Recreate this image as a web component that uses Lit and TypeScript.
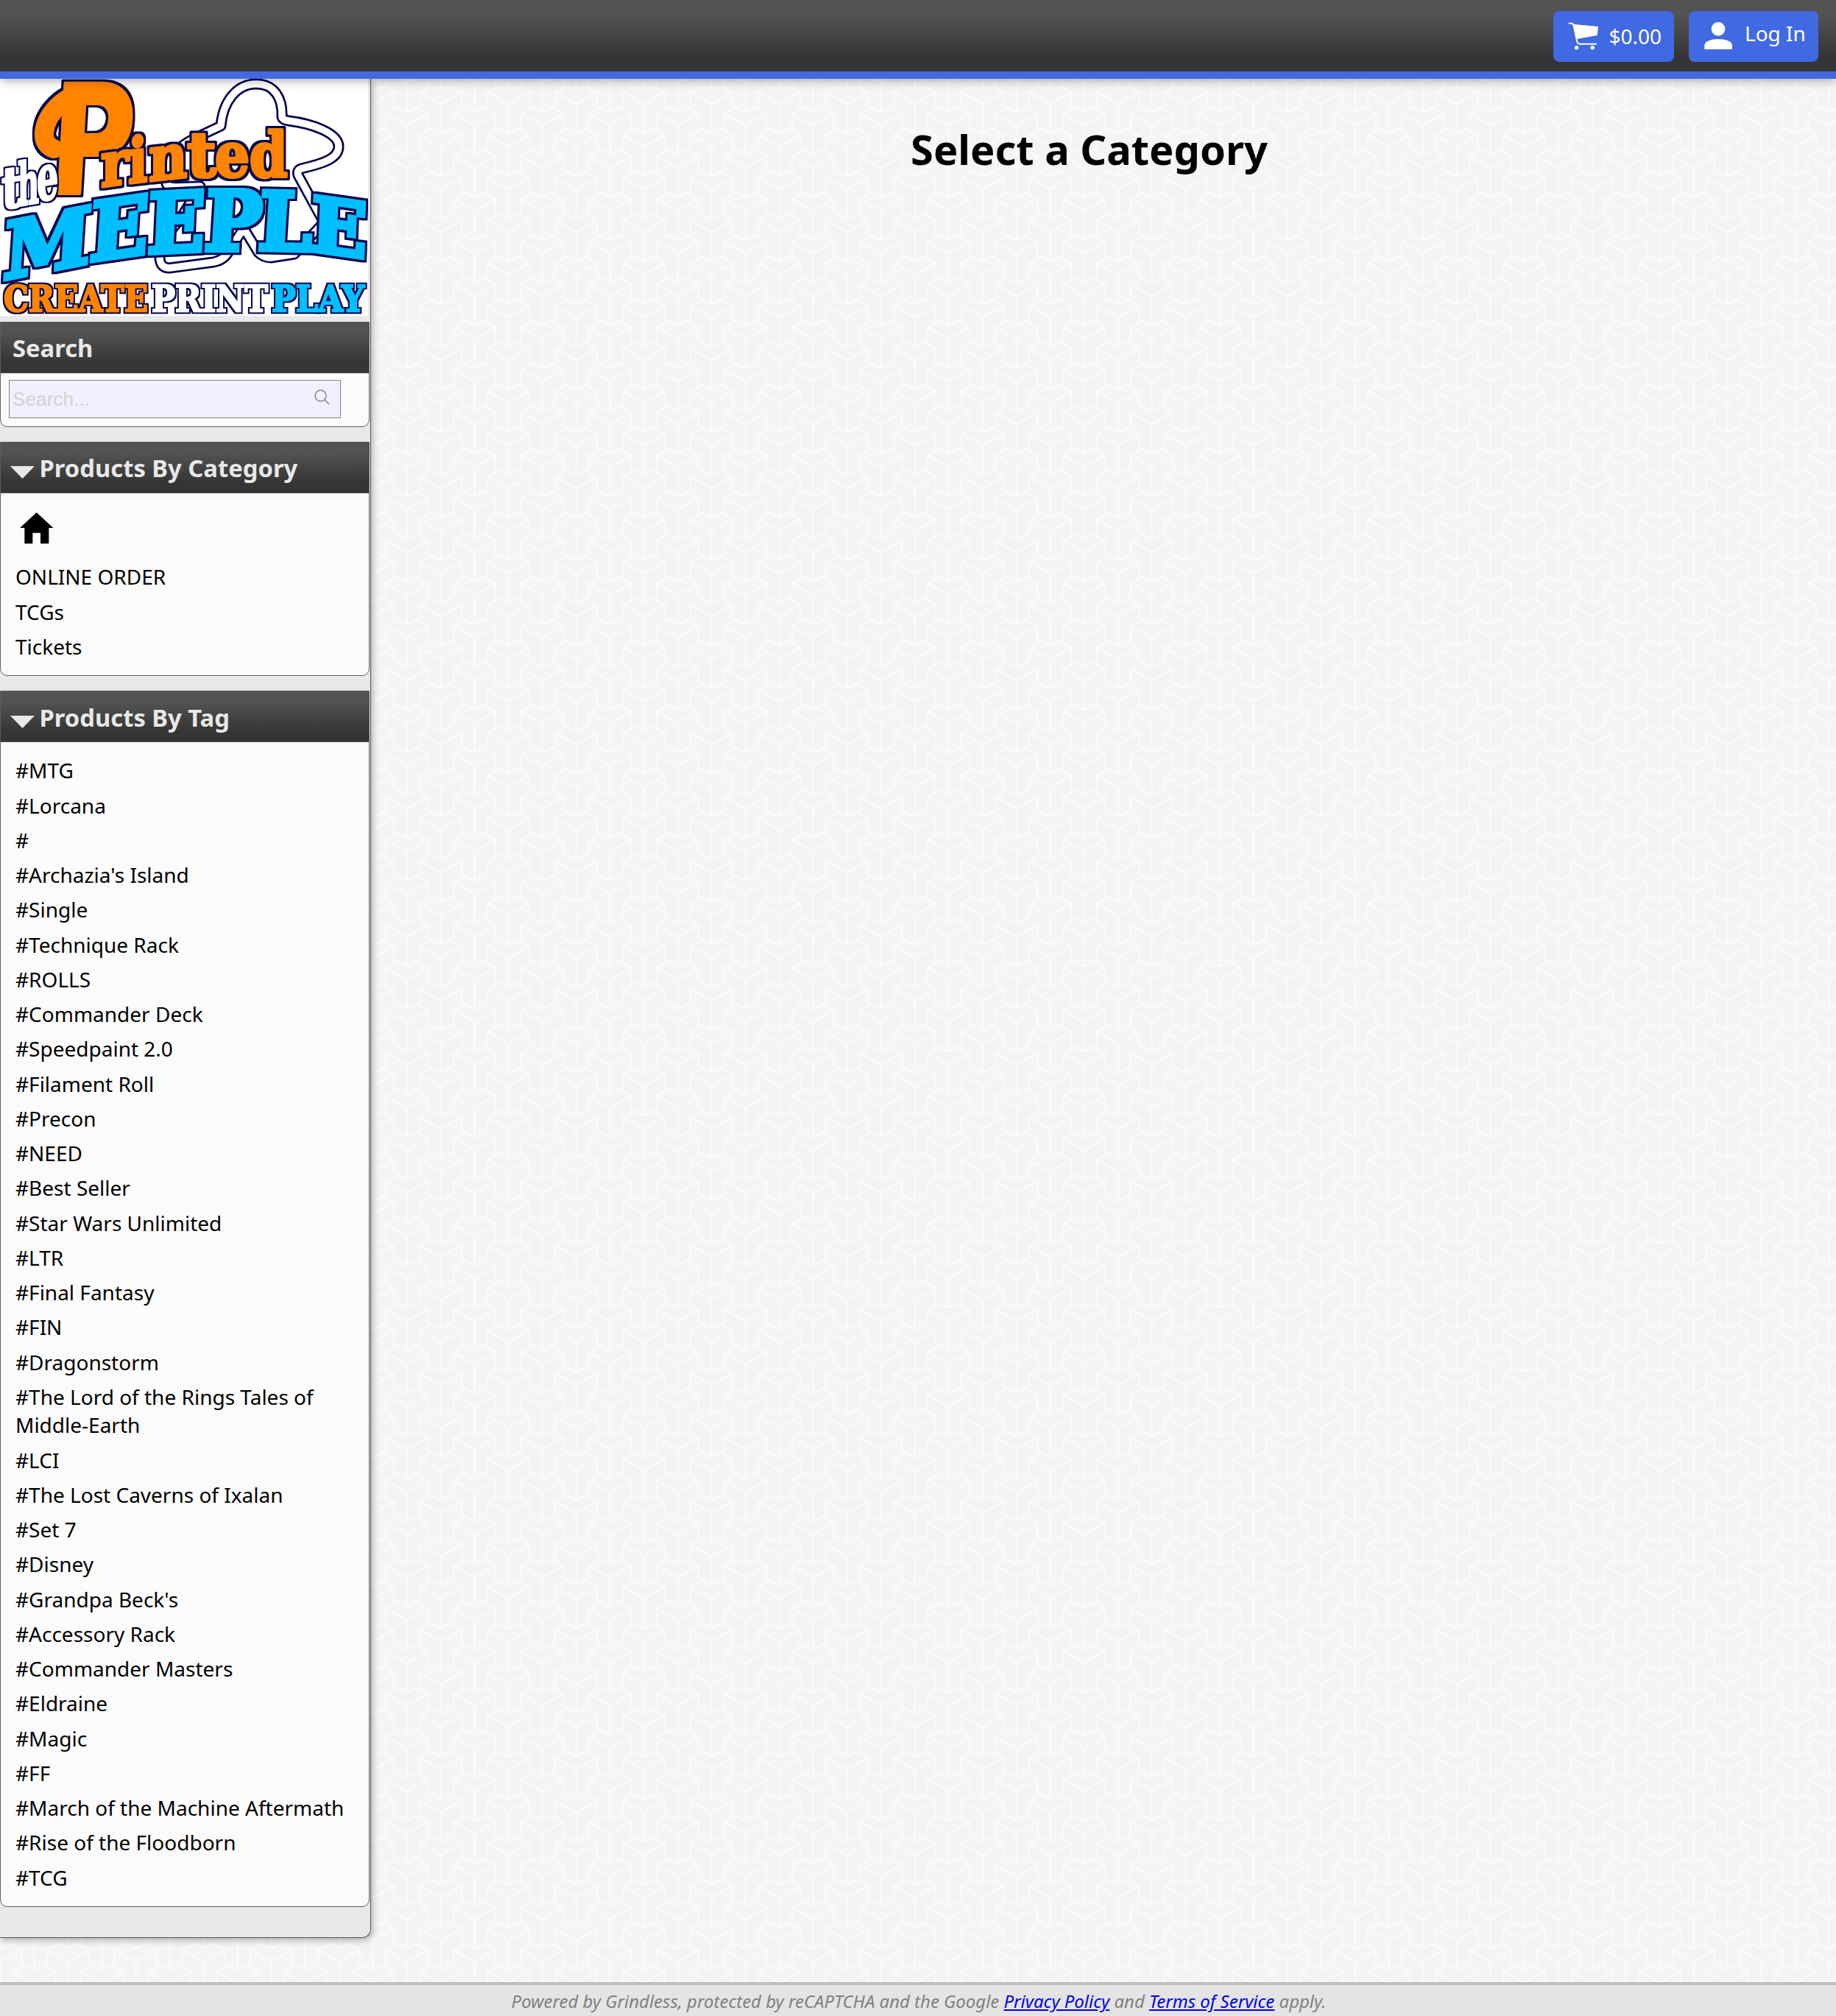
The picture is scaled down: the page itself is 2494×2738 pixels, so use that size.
import { LitElement, html, svg, css } from "lit";
import { customElement } from "lit/decorators.js";

const categories = ["ONLINE ORDER", "TCGs", "Tickets"];

const tags = [
  "MTG", "Lorcana", "", "Archazia's Island", "Single", "Technique Rack", "ROLLS",
  "Commander Deck", "Speedpaint 2.0", "Filament Roll", "Precon", "NEED", "Best Seller",
  "Star Wars Unlimited", "LTR", "Final Fantasy", "FIN", "Dragonstorm",
  "The Lord of the Rings Tales of Middle-Earth", "LCI", "The Lost Caverns of Ixalan",
  "Set 7", "Disney", "Grandpa Beck's", "Accessory Rack", "Commander Masters", "Eldraine",
  "Magic", "FF", "March of the Machine Aftermath", "Rise of the Floodborn", "TCG",
];

type Glyph = [string, string];

// Each letter of the wordmark sits on its own slanted baseline.
const meeple: Glyph[] = [
  ["M", "matrix(1.07 -.21 -.07 1.07 3 273)"],
  ["E", "matrix(1.04 -.15 -.07 1.1 120 248)"],
  ["E", "matrix(1.02 -.05 -.05 1.12 199 237)"],
  ["P", "matrix(1.03 0 -.07 1.12 276 233)"],
  ["L", "matrix(1.04 .02 -.07 1.09 349 232)"],
  ["E", "matrix(1.0 .14 -.04 1.02 421 233)"],
];

const printed: Glyph[] = [
  ["r", "matrix(.72 -.1 0 .84 137 147)"],
  ["i", "matrix(.7 -.08 0 .84 174 142)"],
  ["n", "matrix(.72 -.08 0 .84 202 139)"],
  ["t", "matrix(.86 0 0 .84 254 133)"],
  ["e", "matrix(.74 0 0 .84 292 133)"],
  ["d", "matrix(.74 0 0 .84 339 133)"],
];

const the: Glyph[] = [
  ["t", "matrix(.6 -.09 0 .78 2 177)"],
  ["h", "matrix(.4 -.07 0 .8 24 173)"],
  ["e", "matrix(.46 -.07 0 .86 50 166)"],
];

@customElement("store-logo")
class StoreLogo extends LitElement {
  static styles = css`
    :host { display: block; width: 500px; height: 322px; background: #fff; }
    svg { display: block; }
    text { font-family: "DejaVu Serif", serif; font-weight: 700; font-size: 100px; stroke-linejoin: round; }
    .sky { fill: #00bfff; stroke: #00bfff; stroke-width: 6; stroke-linejoin: miter; }
    .orange { fill: #ff8400; stroke: #ff8400; stroke-width: 5; }
    .white { fill: #fff; stroke: #fff; stroke-width: 4; }
    .small { font-size: 49px; stroke-width: 2.4; stroke-linejoin: miter; }
    .initial { font-family: "DejaVu Sans", sans-serif; stroke-width: 2; }
    .line { fill: none; stroke-linecap: round; stroke-linejoin: round; }
    .navy { stroke: #04044c; }
    .inner { stroke: #fff; }
    .amber { stroke: #ff8400; }
    .rim { filter: url(#rim); }
    .thin { filter: url(#thin); }
  `;

  word(letters: Glyph[], cls: string, rim: string) {
    return svg`<g class=${rim}>${letters.map(
      ([c, m]) => svg`<text class=${cls} transform=${m}>${c}</text>`,
    )}</g>`;
  }

  tagline(word: string, x: number, width: number, cls: string) {
    return svg`<g class="thin"><text class="${cls} small" x=${x} y="316" textLength=${width} lengthAdjust="spacingAndGlyphs">${word}</text></g>`;
  }

  rim(id: string, radius: number) {
    return svg`<filter id=${id} x="-10" y="-10" width="520" height="342" filterUnits="userSpaceOnUse" color-interpolation-filters="sRGB">
      <feMorphology in="SourceAlpha" operator="dilate" radius=${radius} result="fat"></feMorphology>
      <feGaussianBlur in="fat" stdDeviation="0.6" result="soft"></feGaussianBlur>
      <feFlood flood-color="#04044c"></feFlood>
      <feComposite in2="soft" operator="in" result="edge"></feComposite>
      <feMerge><feMergeNode in="edge"></feMergeNode><feMergeNode in="SourceGraphic"></feMergeNode></feMerge>
    </filter>`;
  }

  render() {
    const body =
      "M226 142 C222 118 232 98 262 82 L300 64 C303 30 322 7 348 7 C374 7 384 28 383 52 Q384 56 392 57 C425 61 460 74 460 92 C460 108 440 115 409 122 Q403 124 405 131 L440 195 L400 238 L368 243 Q358 243 351 236 L331 203 L312 232 Q306 246 290 249 L230 257 Q217 257 217 242 L217 225 L245 190 L272 146 L240 147 Q227 147 226 142Z";
    const curl = "M73 95 C52 88 58 58 78 38 C92 24 108 18 132 18";
    return html`<svg width="500" height="322" viewBox="0 0 500 322">
      <defs>${this.rim("rim", 3)}${this.rim("thin", 2)}</defs>
      <path class="line navy" stroke-width="15" d=${body}></path>
      <path class="line inner" stroke-width="9.6" d=${body}></path>
      ${svg`<g class="rim">
        <path class="line amber" stroke-width="26" d=${curl}></path>
        <text class="orange initial" transform="matrix(1.56 0 -.12 2.06 65 156)">P</text>
      </g>`}
      ${this.word(the, "white", "thin")} ${this.word(printed, "orange", "rim")} ${this.word(meeple, "sky", "rim")}
      ${this.tagline("CREATE", 5, 196, "orange")}
      ${this.tagline("PRINT", 206, 158, "white")}
      ${this.tagline("PLAY", 369, 126, "sky")}
    </svg>`;
  }
}

@customElement("app-root")
class AppRoot extends LitElement {
  static styles = css`
    :host {
      display: flex; flex-direction: column; position: relative; isolation: isolate;
      width: 100%; height: 2738px; overflow: hidden; background: #f4f4f4;
      font-family: "Noto Sans", sans-serif; font-size: 28px; line-height: 38.5px; color: #000;
    }
    * { box-sizing: border-box; }
    .backdrop { position: absolute; inset: 0; z-index: -1; width: 100%; height: 100%; }
    .topbar {
      flex: none; display: flex; justify-content: flex-end; align-items: flex-start; gap: 20px;
      height: 107px; padding: 14.5px 24.5px 0 0; position: relative; z-index: 2;
      background: linear-gradient(#535353 20%, #353535 80%);
      border-bottom: 10px solid #4169e1; box-shadow: 0 3px 12px rgba(0, 0, 0, .3);
    }
    .button {
      display: flex; height: 69.5px; border-radius: 8px; background: #4169e1; color: #fff;
    }
    .cart { width: 164px; padding: 14.5px 0 0 20px; }
    .login { width: 176px; padding: 14.5px 0 0 21px; }
    .cart span { margin: .5px 0 0 14px; }
    .login span { margin: -3.5px 0 0 13.5px; }
    .page { flex: 1; display: flex; align-items: flex-start; min-height: 0; }
    .sidebar {
      flex: none; width: 504px; height: 2525px; background: #e8e8e8;
      border: solid #555; border-width: 0 1.5px 1.5px 0; border-radius: 0 0 12px 0;
      box-shadow: 2px 3px 10px rgba(0, 0, 0, .3);
      display: flex; flex-direction: column;
    }
    .panel {
      flex: none; width: 502px; background: #fbfbfb; border: 1.5px solid #5c5c5c;
      border-radius: 0 0 10px 10px; margin-bottom: 20px;
    }
    .panel.search { margin-top: 8px; height: 142.5px; margin-bottom: 20.5px; }
    .panel.category { height: 318px; }
    .panel.tag { height: 1652px; margin-bottom: 0; }
    h3 {
      display: flex; align-items: center; margin: 0; height: 68.5px; padding: 1px 0 0 16px;
      font-size: 32.76px; line-height: 45px; color: #e8e8e8; border-bottom: 1px solid #555;
      background: linear-gradient(#535353 20%, #353535 80%);
    }
    h3.toggle { padding-left: 13px; gap: 6.5px; }
    .tag h3 { padding-top: 3px; }
    .arrow { margin-top: 12px; width: 33px; height: 17px; }
    .field {
      display: flex; align-items: center; justify-content: space-between;
      width: 451px; height: 52px; margin: 9px 0 0 11px; padding: 2px 12px 0 4px;
      background: #f0f0ff; border: 1px solid #858585;
      font-family: "Liberation Sans", sans-serif; font-size: 26.25px; color: #d3d3d3;
    }
    .field svg { margin-top: -6px; }
    .home { display: block; margin: 26.5px 0 21.5px 25.5px; }
    ul { list-style: none; margin: 0; padding: 0 20px; }
    .tag ul { padding-top: 15.4px; }
    li { padding: 4.385px 0; }
    main { flex: 1; padding: 57px 39px 0 0; text-align: center; }
    h1 { margin: 0; font-size: 56px; line-height: 76px; font-weight: 700; }
    footer {
      flex: none; height: 46px; background: #e4e4e4; border-top: 4px solid #bfbfbf;
      padding: 6px 0 0 2px; text-align: center; font-size: 23.94px; line-height: 32px;
      font-style: italic; color: #808080;
    }
    footer a { color: #0000ee; text-decoration: underline; }
  `;

  backdrop() {
    const block = "M-13 -7 L0 0 L13 -7 L28.5 2 L0 17.5 L-28.5 2 Z M0 17.5 V58 M-28.5 2 V21 M28.5 2 V21";
    const spots = [[0, 0], [92, 0], [46, 29], [0, 58], [92, 58], [46, -29], [46, 87], [0, -58], [92, -58]];
    return html`<svg class="backdrop" aria-hidden="true">
      <defs>
        <pattern id="blocks" x="0.6" y="36.6" width="92" height="58" patternUnits="userSpaceOnUse">
          ${spots.map(([x, y]) => svg`<path d=${block} transform="translate(${x} ${y})" fill="none" stroke="#fafafa" stroke-width="2.4"></path>`)}
        </pattern>
      </defs>
      <rect width="100%" height="100%" fill="url(#blocks)"></rect>
    </svg>`;
  }

  arrow() {
    return html`<svg class="arrow" viewBox="0 0 33 17"><path d="M0 0H33L16.5 17Z" fill="#e8e8e8"></path></svg>`;
  }

  render() {
    return html`
      ${this.backdrop()}
      <header class="topbar">
        <div class="button cart">
          <svg width="42" height="40" viewBox="147 87 126 120" fill="#fff">
            <path d="M152 95H160Q168 95 170 104L183 166Q186 179 194 179H261" fill="none" stroke="#fff" stroke-width="6" stroke-linecap="round"></path>
            <path d="M166 98L270 108L266 144L182 159Z"></path>
            <circle cx="182" cy="194" r="8"></circle><circle cx="247" cy="194" r="8"></circle>
          </svg>
          <span>$0.00</span>
        </div>
        <div class="button login">
          <svg width="42" height="40" viewBox="704 87 126 120" fill="#fff">
            <circle cx="761" cy="118" r="28"></circle>
            <path d="M705 201V184C707 168 732 159 761 159C790 159 816 168 818 184V201Z"></path>
          </svg>
          <span>Log In</span>
        </div>
      </header>
      <div class="page">
        <aside class="sidebar">
          <store-logo></store-logo>
          <section class="panel search">
            <h3>Search</h3>
            <div class="field">
              <span>Search...</span>
              <svg width="24" height="24" viewBox="0 0 24 24" fill="none" stroke="#858585" stroke-width="1.5">
                <circle cx="9.5" cy="9.5" r="7.5"></circle><path d="M15 15L21 21"></path>
              </svg>
            </div>
          </section>
          <section class="panel category">
            <h3 class="toggle">${this.arrow()}Products By Category</h3>
            <svg class="home" width="46" height="42.5" viewBox="80 109 138 127.5">
              <path d="M148 109L216 172H198V236H164V192H132V236H99V172H80Z"></path>
            </svg>
            <ul>${categories.map((c) => html`<li>${c}</li>`)}</ul>
          </section>
          <section class="panel tag">
            <h3 class="toggle">${this.arrow()}Products By Tag</h3>
            <ul>${tags.map((t) => html`<li>#${t}</li>`)}</ul>
          </section>
        </aside>
        <main><h1>Select a Category</h1></main>
      </div>
      <footer>Powered by Grindless, protected by reCAPTCHA and the Google <a>Privacy Policy</a> and <a>Terms of Service</a> apply.</footer>
    `;
  }
}
